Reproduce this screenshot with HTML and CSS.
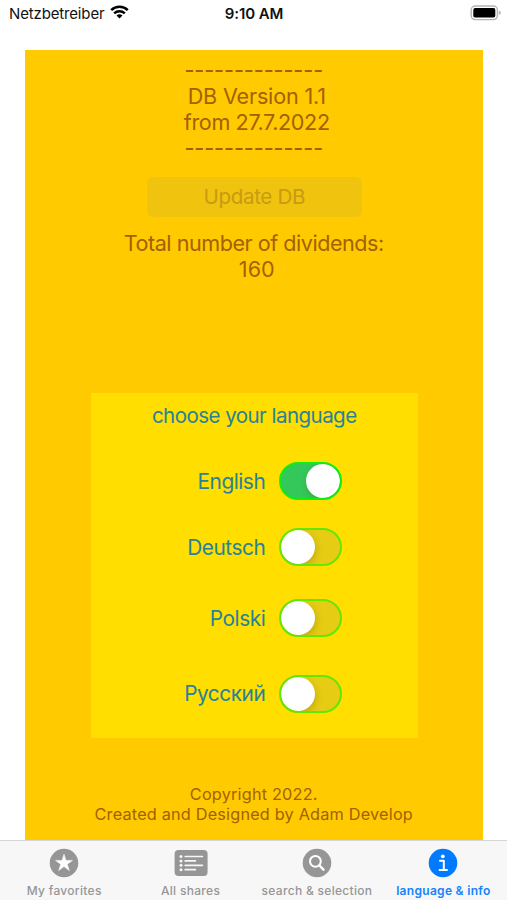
FILE: index.html
```html
<!DOCTYPE html>
<html lang="en">
<head>
<meta charset="utf-8">
<title>Language &amp; info</title>
<link rel="stylesheet" href="styles.css">
</head>
<body>
<header class="status">
  <div class="carrier"><span>Netzbetreiber</span>
    <svg class="wifi" width="19" height="14" viewBox="0 0 19 14" fill="none" stroke="#000" stroke-width="2.5"><path d="M1.2 5.1a12 12 0 0 1 16.6 0"/><path d="M4.2 8.3a7.7 7.7 0 0 1 10.6 0"/><path d="M9.5 13.5L6.5 10.5Q9.5 8.2 12.5 10.5Z" fill="#000" stroke="none"/></svg>
  </div>
  <time class="clock">9:10 AM</time>
  <svg class="battery" width="31" height="16" viewBox="0 0 31 16"><rect x="1.2" y="1" width="26.2" height="13.6" rx="4" fill="#fff" stroke="#b4b4b4" stroke-width="1.4"/><rect x="3.3" y="3.1" width="22" height="9.4" rx="1.8"/><path d="M28.9 5.7q2 .6 2 2.1t-2 2.1z" fill="#b4b4b4"/></svg>
</header>
<main class="panel">
  <section class="db">
    <p class="rule">--------------</p>
    <p class="version">DB Version 1.1</p>
    <p class="from">from 27.7.2022</p>
    <p class="rule">--------------</p>
  </section>
  <button class="update" disabled>Update DB</button>
  <section class="total"><p class="total-label">Total number of dividends:</p><p class="count">160</p></section>
  <section class="languages">
    <h2>choose your language</h2>
    <div class="lang english"><span>English</span><i class="switch on"></i></div>
    <div class="lang deutsch"><span>Deutsch</span><i class="switch"></i></div>
    <div class="lang polski"><span>Polski</span><i class="switch"></i></div>
    <div class="lang russian"><span>Русский</span><i class="switch"></i></div>
  </section>
  <footer class="copyright"><p class="year">Copyright 2022.</p><p class="author">Created and Designed by Adam Develop</p></footer>
</main>
<nav class="tabs">
  <a class="tab favorites"><svg width="30" height="30" viewBox="0 0 30 30"><circle cx="15" cy="15" r="14.3" fill="#969696"/><path d="M15 6.2l2 6.2h6.5l-5.2 3.8 2 6.3-5.3-3.9-5.3 3.9 2-6.3-5.2-3.8H13z" fill="#fff" stroke="#fff" stroke-width=".5"/></svg><span>My favorites</span></a>
  <a class="tab shares"><svg width="34" height="30" viewBox="0 0 34 30"><rect x=".6" y="2" width="33" height="26" rx="4" fill="#969696"/><g stroke="#f7f7f7" stroke-width="1.7" stroke-linecap="round"><path d="M11.2 8.5h17.2M11.2 12.9h10.2M11.2 17.3h17.2M11.2 21.7h10.2"/></g><g fill="#f7f7f7"><circle cx="7" cy="8.5" r="1.5"/><circle cx="7" cy="12.9" r="1.5"/><circle cx="7" cy="17.3" r="1.5"/><circle cx="7" cy="21.7" r="1.5"/></g></svg><span>All shares</span></a>
  <a class="tab search"><svg width="30" height="30" viewBox="0 0 30 30"><circle cx="15" cy="15" r="14.3" fill="#969696"/><g fill="none" stroke="#fff" stroke-width="2" stroke-linecap="round"><circle cx="13.4" cy="13.3" r="5.4"/><path d="M17.5 17.5l4 4.1" stroke-width="2.5"/></g></svg><span>search &amp; selection</span></a>
  <a class="tab info"><svg width="30" height="30" viewBox="0 0 30 30"><circle cx="15" cy="15" r="14.3" fill="#007aff"/><circle cx="14.8" cy="8.3" r="1.9" fill="#fff"/><path d="M12 12.8h3.8v9M11.6 22h7.4" fill="none" stroke="#fff" stroke-width="2" stroke-linecap="round" stroke-linejoin="round"/></svg><span>language &amp; info</span></a>
</nav>
</body>
</html>
```
FILE: styles.css
```css
* { box-sizing: border-box; }
body { margin: 0; width: 507px; height: 900px; overflow: hidden; display: flex; flex-direction: column; background: #fff; color: #a46004; font-family: Inter, "Liberation Sans", sans-serif; }
p, h2 { margin: 0; font-weight: 400; white-space: nowrap; }
.status { height: 50px; padding: 0 6px 0 9px; display: grid; grid-template-columns: 1fr auto 1fr; align-items: start; color: #111; font-size: 15px; line-height: 28px; }
.carrier { display: flex; gap: 6px; letter-spacing: -.15px; }
.wifi { margin-top: 5px; }
.clock { font-weight: 600; font-size: 15px; margin-right: 2px; letter-spacing: -.1px; }
.battery { justify-self: end; margin-top: 5px; }
.panel { width: 457.5px; height: 790px; margin-left: 25px; background: #ffcb00; display: flex; flex-direction: column; align-items: center; flex: none; }
.db { padding-top: 7px; font-size: 21.6px; line-height: 26.1px; text-align: center; height: 127px; }
.rule { letter-spacing: -.08px; font-weight: 500; }
.version { padding-left: 6px; letter-spacing: -.18px; }
.from { padding-left: 6px; letter-spacing: -.38px; }
.update { width: 215px; height: 40px; margin-left: 1px; border: 0; border-radius: 6px; padding: 0; background: #f0c30f; color: #c79b13; font: 400 20.6px/40px Inter, sans-serif; letter-spacing: -.35px; }
.total { margin-top: 13px; height: 163px; font-size: 21.6px; line-height: 26.3px; text-align: center; }
.total-label { letter-spacing: -.48px; }
.count { padding-left: 6px; }
.languages { width: 327px; height: 345px; margin-left: 1px; background: #ffde00; color: #27829a; padding-top: 10px; }
.languages h2 { font-size: 20.5px; line-height: 25px; height: 26px; letter-spacing: -.53px; text-align: center; }
.lang { display: grid; grid-template-columns: 174.5px 63px; column-gap: 14px; align-items: center; height: 38px; font-size: 20.8px; letter-spacing: -.45px; text-align: right; }
.english { margin-top: 33px; }
.deutsch { margin-top: 28px; }
.polski { margin-top: 33px; }
.russian { margin-top: 37.5px; }
.switch { display: flex; align-items: center; width: 63px; height: 38px; padding: 0; border: 2px solid #62e800; border-radius: 19px; background: #e6cc13; overflow: hidden; }
.switch::before { content: ""; width: 34px; height: 34px; border-radius: 50%; background: #fff; box-shadow: 1px 3px 7px rgba(90,70,0,.25); }
.switch.on { justify-content: flex-end; background: #34c759; border-color: #10ee10; }
.copyright { margin-top: 45.5px; text-align: center; font-size: 16.3px; line-height: 20.5px; letter-spacing: .18px; }
.tabs { height: 60px; padding-left: 1px; display: grid; grid-template-columns: repeat(4, 126.4px); background: #f7f7f7; border-top: 1px solid #d5d5d5; }
.tab { display: flex; flex-direction: column; align-items: center; padding-top: 7px; color: #969696; font-size: 12px; line-height: 16px; font-weight: 500; white-space: nowrap; }
.tab span { margin-top: 5px; letter-spacing: .3px; }
.info { color: #1683fc; font-weight: 600; }
```
